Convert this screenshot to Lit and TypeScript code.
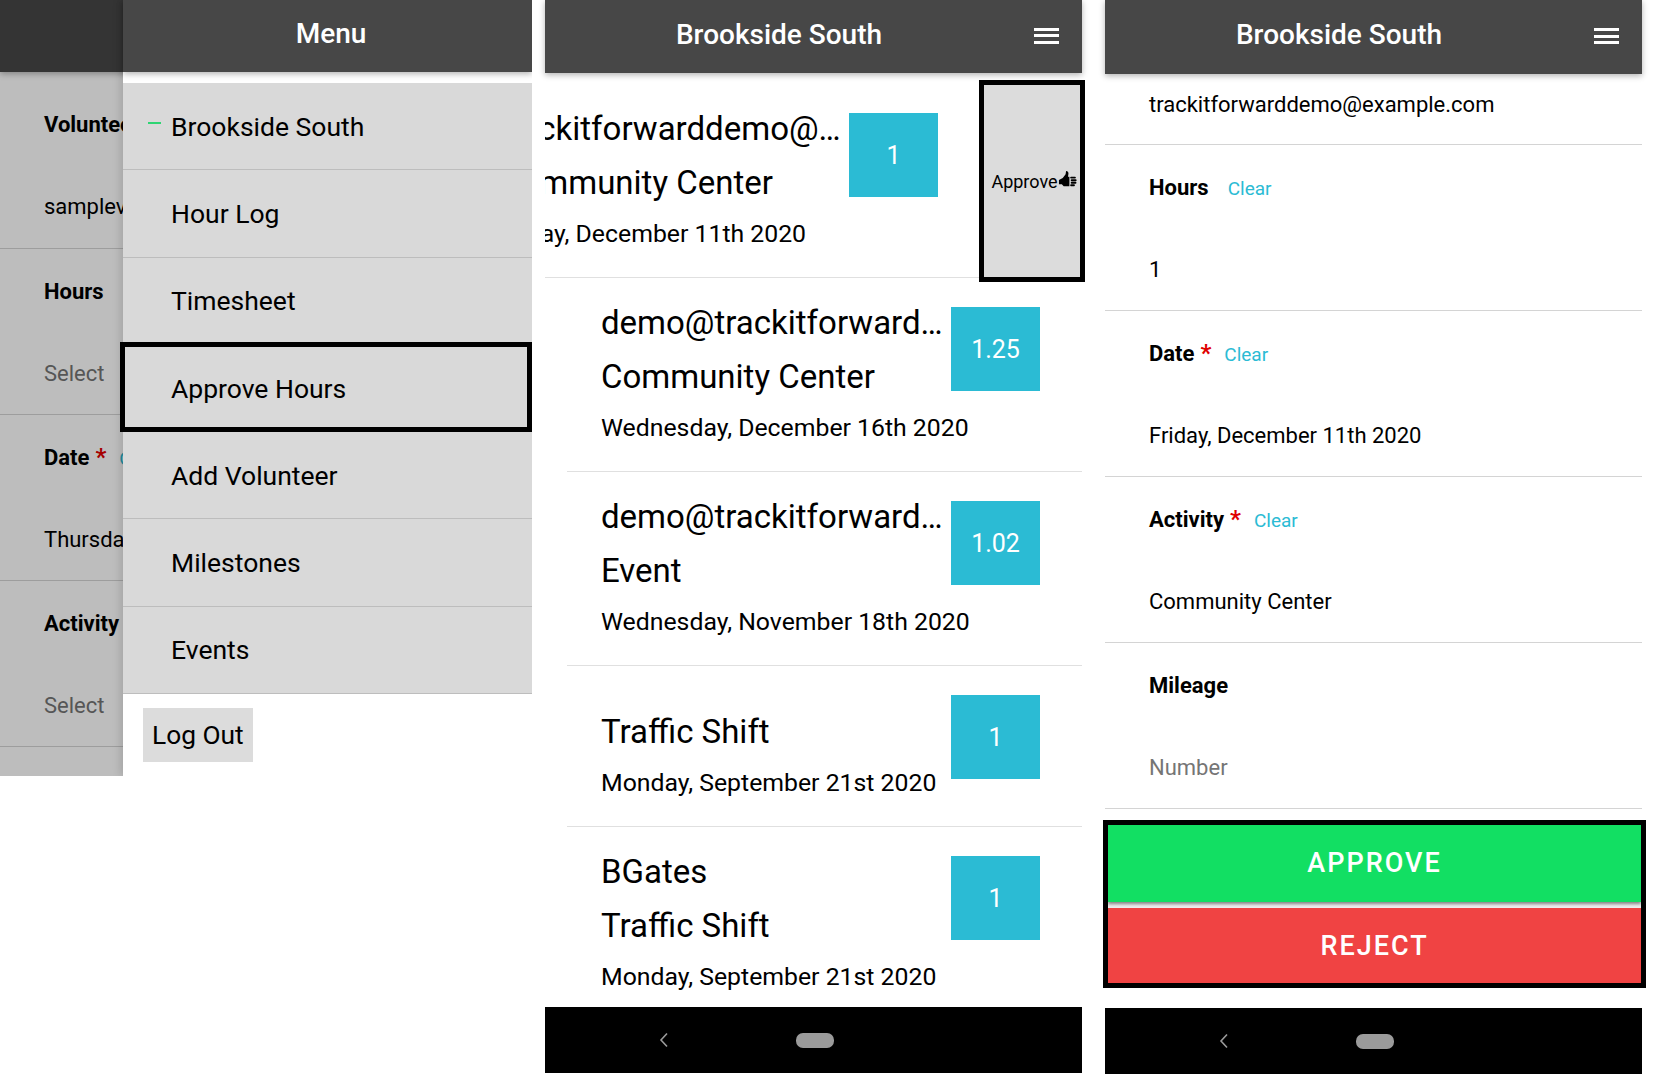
import { LitElement, html, css } from "lit";
import { customElement } from "lit/decorators.js";
import { classMap } from "lit/directives/class-map.js";

const MENU = ["Brookside South", "Hour Log", "Timesheet", "Approve Hours", "Add Volunteer", "Milestones", "Events"];

const ENTRIES = [
  { lines: ["demo@trackitforwarddemo.example", "Community Center"], date: "Wednesday, December 16th 2020", hours: "1.25" },
  { lines: ["demo@trackitforwarddemo.example", "Event"], date: "Wednesday, November 18th 2020", hours: "1.02" },
  { lines: ["Traffic Shift"], date: "Monday, September 21st 2020", hours: "1" },
  { lines: ["BGates", "Traffic Shift"], date: "Monday, September 21st 2020", hours: "1" },
];

const BEHIND = [
  { label: "Volunteer", value: "samplevolunteer@example.com" },
  { label: "Hours", value: "Select", empty: true },
  { label: "Date", req: true, clear: true, value: "Thursday, December 17th 2020" },
  { label: "Activity", req: true, clear: true, value: "Select", empty: true },
];

const FORM = [
  { label: "Hours", clear: true, value: "1" },
  { label: "Date", req: true, clear: true, value: "Friday, December 11th 2020" },
  { label: "Activity", req: true, clear: true, value: "Community Center" },
  { label: "Mileage", value: "Number", empty: true },
];

@customElement("app-root")
export class AppRoot extends LitElement {
  static styles = css`
    :host {
      display: flex;
      align-items: flex-start;
      height: 1081px;
      background: #fff;
      font-family: Roboto, "Liberation Sans", sans-serif;
      color: #000;
      overflow: hidden;
    }
    .panel {
      position: relative;
      display: flex;
      flex-direction: column;
      flex: none;
      width: 537px;
    }
    .drawer-panel {
      width: 532px;
      height: 776px;
      margin-right: 13px;
      overflow: hidden;
    }
    .list-panel {
      height: 1073px;
      margin-right: 23px;
    }
    .form-panel {
      height: 1074px;
    }
    .header {
      position: relative;
      z-index: 2;
      display: flex;
      align-items: center;
      flex: none;
      height: 73px;
      background: #474747;
      color: #fff;
      box-shadow: 0 2px 6px rgba(0, 0, 0, 0.3);
    }
    .form-panel .header {
      height: 74px;
    }
    .drawer-panel > .header {
      height: 72px;
    }
    .title {
      flex: 1;
      padding-bottom: 5px;
      text-align: center;
      font-size: 28px;
      font-weight: 500;
    }
    .burger {
      display: flex;
      flex-direction: column;
      gap: 3.5px;
      width: 25px;
      margin: 0 23px 2px 21px;
    }
    .burger i {
      height: 3px;
      background: #fff;
    }

    .row {
      flex: none;
      box-sizing: border-box;
      padding: 29.5px 44px 0;
      height: 166px;
      border-bottom: 1.5px solid #d4d4d4;
    }
    .row.cut {
      height: 71px;
      padding-top: 17px;
      font-size: 22px;
      line-height: 28px;
    }
    .label {
      display: flex;
      align-items: baseline;
      height: 26px;
      line-height: 26px;
      font-size: 22px;
      font-weight: 700;
    }
    .req {
      color: #e00000;
      margin-left: 6px;
      font-size: 24px;
      line-height: 0;
    }
    .clear {
      margin-left: 19px;
      color: #2bbbd4;
      font-size: 19px;
      font-weight: 400;
    }
    .req + .clear {
      margin-left: 13px;
    }
    .value {
      margin-top: 55px;
      line-height: 28px;
      font-size: 22px;
      white-space: nowrap;
    }
    .value.empty {
      color: #757575;
    }

    .behind {
      flex: none;
      overflow: hidden;
      width: 123px;
      height: 704px;
    }
    .behind .row {
      width: 532px;
    }
    .behind .row:first-child {
      height: 177px;
      padding-top: 39.5px;
    }
    .dim {
      position: absolute;
      inset: 0;
      z-index: 3;
      background: rgba(0, 0, 0, 0.26);
    }
    .drawer {
      position: absolute;
      z-index: 4;
      top: 0;
      bottom: 0;
      left: 123px;
      right: 0;
      display: flex;
      flex-direction: column;
      background: #fff;
      box-shadow: -3px 0 8px rgba(0, 0, 0, 0.12);
    }
    .drawer .title {
      padding-left: 7px;
    }
    .drawer .header {
      height: 72px;
      margin-bottom: 11px;
    }
    .item {
      position: relative;
      display: flex;
      align-items: center;
      box-sizing: border-box;
      height: 87.3px;
      padding: 0 0 0 48px;
      background: #d9d9d9;
      border-bottom: 1.5px solid #bdbdbd;
      font-size: 26.5px;
    }
    .item.focus::after {
      content: "";
      position: absolute;
      top: -3px;
      bottom: -1px;
      left: -3px;
      right: 0;
      border: 5px solid #000;
    }
    .dash {
      position: absolute;
      left: 25px;
      top: 39px;
      width: 13px;
      height: 2px;
      background: #2ed573;
    }
    .logout {
      align-self: flex-start;
      margin: 14px 0 0 20px;
      padding: 0 9px;
      height: 54px;
      line-height: 54px;
      background: #dcdcdc;
      font-size: 26.3px;
    }

    .list {
      flex: 1;
      min-height: 0;
      overflow: hidden;
      padding-top: 10px;
    }
    .entry {
      box-sizing: border-box;
      margin-left: 22px;
      border-bottom: 1.5px solid #e0e0e0;
      overflow: hidden;
    }
    .entry.swiped {
      margin-left: 0;
    }
    .entry-body {
      display: flex;
      align-items: flex-start;
      gap: 4px;
      padding: 18px 42px 16px 34px;
    }
    .swiped .entry-body {
      padding: 19px 42px 16px 56px;
      transform: translateX(-102px);
    }
    .entry-body.single {
      padding-top: 39px;
    }
    .text {
      flex: 1;
      min-width: 0;
    }
    .line {
      height: 54px;
      line-height: 54px;
      font-size: 33px;
      white-space: nowrap;
      overflow: hidden;
      text-overflow: ellipsis;
    }
    .date {
      height: 48px;
      margin-bottom: 3px;
      line-height: 48px;
      font-size: 24.8px;
      white-space: nowrap;
    }
    .hours {
      display: flex;
      align-items: center;
      justify-content: center;
      flex: none;
      width: 89px;
      height: 84px;
      margin-top: 11px;
      background: #2bbbd4;
      color: #fff;
      font-size: 25px;
    }
    .single .hours {
      margin-top: -10px;
    }
    .approve-action {
      position: absolute;
      z-index: 1;
      top: 80px;
      left: 434px;
      width: 106px;
      height: 202px;
      box-sizing: border-box;
      display: flex;
      align-items: center;
      justify-content: center;
      padding-left: 4px;
      border: 5px solid #000;
      background: #dcdcdc;
      font-size: 18px;
    }
    .approve-action svg {
      width: 19px;
      height: 19px;
      flex: none;
      margin-bottom: 3px;
    }

    .actions {
      flex: none;
      display: flex;
      flex-direction: column;
      box-sizing: border-box;
      width: 543px;
      height: 168px;
      margin: 11px 0 0 -2px;
      border: 5px solid #000;
      background: #eee;
    }
    .actions div {
      display: flex;
      align-items: center;
      justify-content: center;
      box-sizing: border-box;
      color: #fff;
      font-size: 27px;
      font-weight: 500;
      letter-spacing: 2px;
    }
    .approve {
      height: 77px;
      padding-bottom: 2px;
      background: #12df63;
      box-shadow: 0 2px 3px rgba(0, 0, 0, 0.45);
    }
    .reject {
      height: 75px;
      margin-top: 6px;
      background: #f04343;
    }
    .nav {
      position: relative;
      flex: none;
      height: 66px;
      background: #000;
    }
    .form-panel .nav {
      margin-top: 20px;
    }
    .nav svg {
      position: absolute;
      left: 113px;
      top: 24px;
    }
    .nav i {
      position: absolute;
      left: 251px;
      top: 26px;
      width: 38px;
      height: 15px;
      border-radius: 7px;
      background: #9b9b9b;
    }
  `;

  burger() {
    return html`<div class="burger"><i></i><i></i><i></i></div>`;
  }

  nav() {
    return html`<div class="nav">
      <svg width="12" height="18" viewBox="0 0 12 18" fill="none" stroke="#9b9b9b" stroke-width="1.6">
        <path d="M9 2.5L3 9l6 6.5" />
      </svg>
      <i></i>
    </div>`;
  }

  field(f: any) {
    return html`<div class="row">
      <div class="label">
        <span>${f.label}</span>
        ${f.req ? html`<span class="req">*</span>` : ""}
        ${f.clear ? html`<span class="clear">Clear</span>` : ""}
      </div>
      <div class=${classMap({ value: true, empty: !!f.empty })}>${f.value}</div>
    </div>`;
  }

  entry(e: any, swiped = false) {
    const single = e.lines.length === 1;
    return html`<div class=${classMap({ entry: true, swiped })}>
      <div class=${classMap({ "entry-body": true, single })}>
        <div class="text">
          ${e.lines.map((l: string) => html`<div class="line">${l}</div>`)}
          <div class="date">${e.date}</div>
        </div>
        <div class="hours">${e.hours}</div>
      </div>
    </div>`;
  }

  render() {
    return html`
      <section class="panel drawer-panel">
        <div class="header"></div>
        <div class="behind">${BEHIND.map((f) => this.field(f))}</div>
        <div class="dim"></div>
        <div class="drawer">
          <div class="header"><div class="title">Menu</div></div>
          ${MENU.map(
            (m, i) => html`<div class=${classMap({ item: true, focus: i === 3 })}>
              ${i === 0 ? html`<span class="dash"></span>` : ""}${m}
            </div>`
          )}
          <div class="logout">Log Out</div>
        </div>
      </section>

      <section class="panel list-panel">
        <div class="header">
          <div class="title">Brookside South</div>
          ${this.burger()}
        </div>
        <div class="list">
          ${this.entry(
            {
              lines: ["trackitforwarddemo@example.com", "Community Center"],
              date: "Friday, December 11th 2020",
              hours: "1",
            },
            true
          )}
          ${ENTRIES.map((e) => this.entry(e))}
        </div>
        <div class="approve-action">
          Approve
          <svg viewBox="0 0 20 20" fill="#000">
            <path d="M1 10.5 L5 8.5 L8 4.5 L8.5 1 Q11 1 11 4 L10.5 7 L12 7 L12 17 L6 17 L4 15 L1 15 Z" />
            <rect x="12.8" y="7" width="6" height="2" rx="1" />
            <rect x="13.4" y="9.8" width="6.2" height="2" rx="1" />
            <rect x="13.4" y="12.4" width="6" height="2" rx="1" />
            <rect x="12.8" y="15" width="5" height="2" rx="1" />
          </svg>
        </div>
        ${this.nav()}
      </section>

      <section class="panel form-panel">
        <div class="header">
          <div class="title">Brookside South</div>
          ${this.burger()}
        </div>
        <div class="row cut">trackitforwarddemo@example.com</div>
        ${FORM.map((f) => this.field(f))}
        <div class="actions">
          <div class="approve">APPROVE</div>
          <div class="reject">REJECT</div>
        </div>
        ${this.nav()}
      </section>
    `;
  }
}
